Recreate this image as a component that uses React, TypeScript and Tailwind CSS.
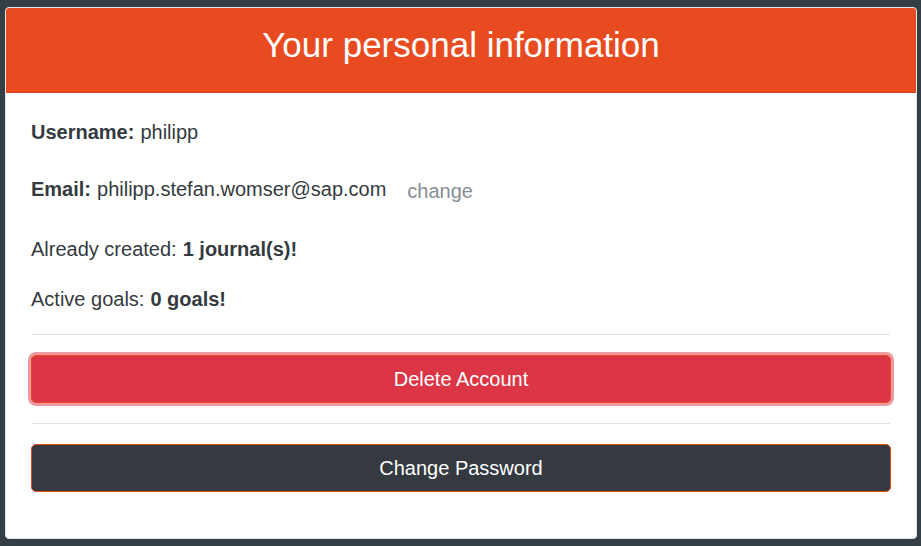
export default function App() {
  return (
    <div className="min-h-[546px] bg-[#343e45] pt-[7px] pb-[7px] pl-[5px] pr-[4px] font-['Liberation_Sans',Arial,sans-serif]">
      <div className="bg-white rounded-[4px] border border-[#e3e6e8] overflow-hidden">
        {/* Header */}
        <div className="h-[85px] bg-[#e84b1f] flex items-center justify-center border-b border-[#d9441b]">
          <h1 className="text-white text-[35px] leading-none mb-[12px]">Your personal information</h1>
        </div>

        {/* Body */}
        <div className="pt-[24px] pb-[46px] px-[25px] text-[#343a40] text-[20px]">
          <div className="h-[30px] flex items-center">
            <span className="font-bold">Username:</span>
            <span className="ml-[6px]">philipp</span>
          </div>

          <div className="mt-[27px] h-[30px] flex items-center">
            <span className="font-bold">Email:</span>
            <span className="ml-[6px]">philipp.stefan.womser@sap.com</span>
            <span className="ml-[21px] mt-[3px] text-[#868e96]">change</span>
          </div>

          <div className="mt-[30px] h-[30px] flex items-center">
            <span>Already created:</span>
            <span className="ml-[6px] font-bold">1 journal(s)!</span>
          </div>

          <div className="mt-[20px] h-[30px] flex items-center">
            <span>Active goals:</span>
            <span className="ml-[6px] font-bold">0 goals!</span>
          </div>

          <hr className="mt-[20px] border-t border-[#e2e2e2] mx-[1px]" />

          <button className="mt-[20px] w-full h-[48px] rounded-[5px] bg-[#dc3545] border border-[#e84b1f] text-white text-[20px] shadow-[0_0_0_3px_rgba(220,53,69,0.5)]">
            Delete Account
          </button>

          <hr className="mt-[20px] border-t border-[#e2e2e2] mx-[1px]" />

          <button className="mt-[20px] w-full h-[48px] rounded-[5px] bg-[#343a40] border border-[#e84b1f] text-white text-[20px]">
            Change Password
          </button>
        </div>
      </div>
    </div>
  );
}
